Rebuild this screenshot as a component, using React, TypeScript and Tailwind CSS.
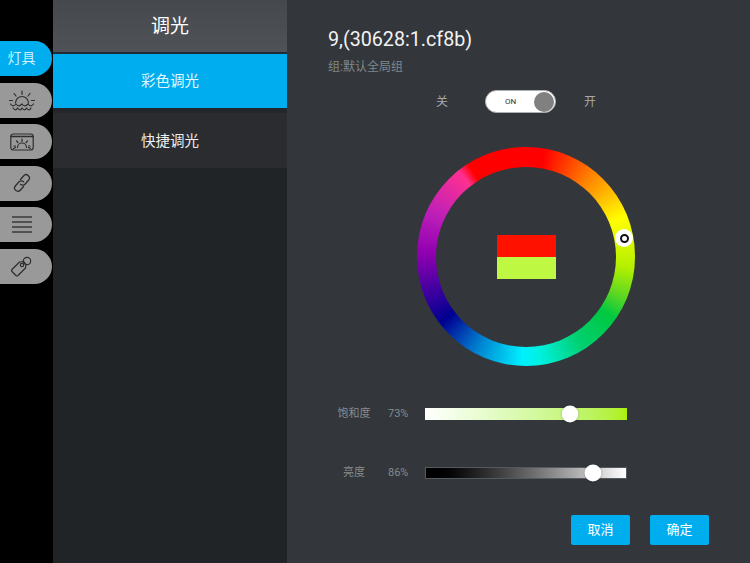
const cjk = "font-['Roboto','Noto_Sans_CJK_SC',sans-serif]";

function Tab({ active, children }: { active?: boolean; children: React.ReactNode }) {
  return (
    <div className={`h-[35px] w-[52px] rounded-r-[18px] flex items-center justify-center pr-[9px] ${active ? "bg-[#00aeef] text-[#cdeefc]" : "bg-[#999999]"}`}>
      {children}
    </div>
  );
}

const ic = { fill: "none", stroke: "#2e2e2e", strokeWidth: 1.2, strokeLinecap: "round" as const, strokeLinejoin: "round" as const };

function Sun() {
  return (
    <svg width="28" height="21" viewBox="0 0 28 21" {...ic}>
      <path d="M7.500 13a6.500 6.500 0 0 1 13 0" />
      <path d="M14 1v3.500M6 3.500l2 2.500M22 3.500l-2 2.500M1.500 10.500h3M23.500 10.500h3" />
      <path d="M2.500 14c1.800 2.500 3.700 2.500 5.500 0c1.800 2.500 3.700 2.500 6 0c1.800 2.500 3.700 2.500 6 0c1.800 2.500 3.700 2.500 5.500 0" />
      <path d="M5 18c1.800 2.500 3.200 2.500 4.500 0c1.800 2.500 3.200 2.500 4.500 0c1.800 2.500 3.200 2.500 4.500 0c1.800 2.500 3.200 2.500 4.500 0" />
    </svg>
  );
}
function Scene() {
  return (
    <svg width="24" height="18" viewBox="0 0 24 18" {...ic}>
      <rect x="0.800" y="1" width="22.400" height="16" rx="2.500" />
      <path d="M1 3.500h22" strokeWidth="1.400" />
      <path d="M7.500 14.500a4.500 4.500 0 0 1 9 0" />
      <path d="M12 6v2.500M6.500 8l1.500 1.500M17.500 8L16 9.500M4 13h1.500M18.500 13H20M3.500 15.500l2-1M20.500 15.500l-2-1" />
    </svg>
  );
}
function Chain() {
  return (
    <svg width="20" height="20" viewBox="0 0 20 20" {...ic} strokeWidth={1.3}>
      <path d="M8.500 6.500l3-3.500a3.200 3.200 0 0 1 5.200 4l-3.500 4a3.200 3.200 0 0 1-4.700.3" />
      <path d="M11.500 13.500l-3 3.500a3.200 3.200 0 0 1-5.200-4l3.500-4a3.200 3.200 0 0 1 4.700-.3" />
    </svg>
  );
}
function Lines() {
  return (
    <svg width="20" height="17" viewBox="0 0 20 17" fill="none" stroke="#3a3a3a" strokeWidth="1.300">
      <path d="M0 1h20M0 6h20M0 11h20M0 16h20" />
    </svg>
  );
}
function TagIcon() {
  return (
    <svg width="21" height="21" viewBox="0 0 21 21" {...ic}>
      <path d="M1 13.500L8.500 6l4-.5 2.500 3-.5 3.500L7 19.500a1.500 1.500 0 0 1-2 0L1 15.500a1.500 1.500 0 0 1 0-2z" />
      <circle cx="11" cy="9" r="1.700" />
      <circle cx="16" cy="5" r="3.700" />
    </svg>
  );
}

function Slider({ label, value, track, thumb, bordered }: { label: string; value: string; track: string; thumb: number; bordered?: boolean }) {
  return (
    <div className="flex items-center h-[24px]">
      <div className="w-[52px] text-center text-[11px] text-[#858c8f] mr-[8px]">{label}</div>
      <div className="w-[37px] text-[11px] text-[#858c8f]">{value}</div>
      <div className={`relative w-[202px] h-[12px] ${track} ${bordered ? "border border-[#55585c]" : ""}`}>
        <div className="absolute top-1/2 -translate-y-1/2 -translate-x-1/2 w-[17px] h-[17px] rounded-full bg-white shadow-[0_0_2px_rgba(0,0,0,0.4)]" style={{ left: thumb }} />
      </div>
    </div>
  );
}

export default function App() {
  return (
    <div className={`w-[750px] h-[563px] flex overflow-hidden bg-black ${cjk}`}>
      <div className="w-[53px] pt-[41px] flex flex-col gap-[6.600px]">
        <Tab active><span className="text-[14px]">灯具</span></Tab>
        <Tab><Sun /></Tab>
        <Tab><Scene /></Tab>
        <Tab><Chain /></Tab>
        <Tab><Lines /></Tab>
        <Tab><TagIcon /></Tab>
      </div>

      <div className="w-[234px] flex flex-col bg-[#212426]">
        <div className="h-[52px] pt-[2px] bg-gradient-to-b from-[#45494e] to-[#4f5358] flex items-center justify-center text-white text-[19px]">调光</div>
        <div className="h-[2px] bg-[#1f2c36]" />
        <div className="h-[54px] pt-[2px] bg-[#00aeef] flex items-center justify-center text-[#e6f7fe] text-[14.500px]">彩色调光</div>
        <div className="h-[5px] bg-[#23262a]" />
        <div className="h-[55px] pt-[2px] bg-[#2a2c30] flex items-center justify-center text-[#eeeeee] text-[14.500px]">快捷调光</div>
      </div>

      <div className="w-[463px] bg-[#33363b] flex flex-col pl-[41px]">
        <div className="pt-[28px] h-[51px] text-[#f2f2f2] text-[19.700px] leading-[24px]">9,(30628:1.cf8b)</div>
        <div className="mt-[8px] h-[16px] leading-[16px] text-[12px] text-[#7f888b]">组:默认全局组</div>

        <div className="mt-[15px] h-[23px] flex items-center">
          <span className="ml-[108px] w-[13px] text-[12px] text-[#a6a9ac]">关</span>
          <div className="relative ml-[36px] w-[71px] h-[23px] rounded-full bg-white border border-[#b0b0b0] flex items-center pl-[19px]">
            <span className="text-[8px] text-[#333]">ON</span>
            <div className="absolute right-[1px] top-[0.500px] w-[20px] h-[20px] rounded-full bg-[#808080]" />
          </div>
          <span className="ml-[28px] text-[12px] text-[#a6a9ac]">开</span>
        </div>

        <div className="relative mt-[34px] ml-[89px] w-[218px] h-[219px] rounded-full bg-[conic-gradient(#ff0000_0deg,#ff0000_10deg,#ff8000_38deg,#ffb000_50deg,#ffff00_68deg,#b4f000_96deg,#60d820_112deg,#00c840_125deg,#00d070_148deg,#00f0e0_172deg,#00f0ff_182deg,#0080d0_208deg,#000090_232deg,#4000a0_250deg,#9000b0_272deg,#c020b8_296deg,#ff3090_322deg,#ff0000_328deg)] flex items-center justify-center">
          <div className="w-[180px] h-[180px] rounded-full bg-[#33363b] flex flex-col items-center justify-center">
            <div className="w-[59px] h-[22px] bg-[#ff1100]" />
            <div className="w-[59px] h-[22px] bg-[#bef842]" />
          </div>
          <div className="absolute left-[198px] top-[82px] w-[18px] h-[18px] rounded-full bg-white flex items-center justify-center">
            <div className="w-[9px] h-[9px] rounded-full border-2 border-[#111] bg-white" />
          </div>
        </div>

        <div className="mt-[36px] flex flex-col gap-[35px]">
          <Slider label="饱和度" value="73%" track="bg-gradient-to-r from-white to-[#aef000]" thumb={145} />
          <Slider label="亮度" value="86%" track="bg-gradient-to-r from-black to-white" thumb={167} bordered />
        </div>

        <div className="mt-[30px] ml-[243px] flex gap-[20px]">
          <div className="w-[59px] h-[30px] rounded-[2px] bg-[#00aeef] flex items-center justify-center text-white text-[13px]">取消</div>
          <div className="w-[59px] h-[30px] rounded-[2px] bg-[#00aeef] flex items-center justify-center text-white text-[13px]">确定</div>
        </div>
      </div>
    </div>
  );
}
